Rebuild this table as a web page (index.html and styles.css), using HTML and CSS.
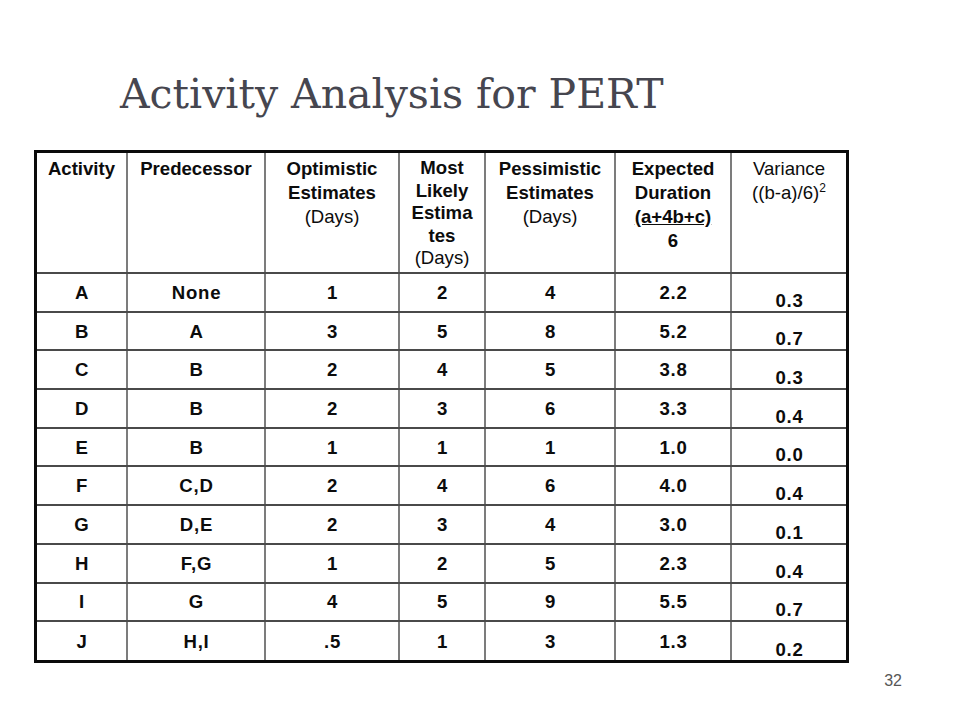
FILE: index.html
```html
<!DOCTYPE html>
<html lang="en">
<head>
<meta charset="utf-8">
<title>Activity Analysis for PERT</title>
<link rel="stylesheet" href="styles.css">
</head>
<body>
<div class="slide">
  <h1 class="title">Activity Analysis for PERT</h1>
  <div class="frame">
    <table class="pert">
      <colgroup>
        <col class="c-act">
        <col class="c-pred">
        <col class="c-opt">
        <col class="c-most">
        <col class="c-pess">
        <col class="c-exp">
        <col class="c-var">
      </colgroup>
      <thead>
        <tr class="head">
          <th>Activity</th>
          <th>Predecessor</th>
          <th>Optimistic<br>Estimates<br><span class="reg">(Days)</span></th>
          <th class="tight">Most<br>Likely<br>Estima<br>tes<br><span class="reg">(Days)</span></th>
          <th>Pessimistic<br>Estimates<br><span class="reg">(Days)</span></th>
          <th>Expected<br>Duration<br><span class="ul">(a+4b+c)</span><br>6</th>
          <th class="reg var-head">Variance<br>((b-a)/6)<sup>2</sup></th>
        </tr>
      </thead>
      <tbody>
        <tr><td>A</td><td>None</td><td>1</td><td>2</td><td>4</td><td>2.2</td><td class="var">0.3</td></tr>
        <tr><td>B</td><td>A</td><td>3</td><td>5</td><td>8</td><td>5.2</td><td class="var">0.7</td></tr>
        <tr><td>C</td><td>B</td><td>2</td><td>4</td><td>5</td><td>3.8</td><td class="var">0.3</td></tr>
        <tr><td>D</td><td>B</td><td>2</td><td>3</td><td>6</td><td>3.3</td><td class="var">0.4</td></tr>
        <tr><td>E</td><td>B</td><td>1</td><td>1</td><td>1</td><td>1.0</td><td class="var">0.0</td></tr>
        <tr><td>F</td><td>C,D</td><td>2</td><td>4</td><td>6</td><td>4.0</td><td class="var">0.4</td></tr>
        <tr><td>G</td><td>D,E</td><td>2</td><td>3</td><td>4</td><td>3.0</td><td class="var">0.1</td></tr>
        <tr><td>H</td><td>F,G</td><td>1</td><td>2</td><td>5</td><td>2.3</td><td class="var">0.4</td></tr>
        <tr><td>I</td><td>G</td><td>4</td><td>5</td><td>9</td><td>5.5</td><td class="var">0.7</td></tr>
        <tr><td>J</td><td>H,I</td><td>.5</td><td>1</td><td>3</td><td>1.3</td><td class="var">0.2</td></tr>
      </tbody>
    </table>
  </div>
  <div class="pageno">32</div>
</div>
</body>
</html>
```

FILE: styles.css
```css
html, body {
  margin: 0;
  padding: 0;
  background: #ffffff;
}

.slide {
  width: 960px;
  height: 720px;
  display: flex;
  flex-direction: column;
  align-items: flex-start;
}

.title {
  margin: 70px 0 0 120px;
  font-family: "DejaVu Serif", "Liberation Serif", serif;
  font-weight: normal;
  font-size: 41px;
  line-height: 48px;
  color: #46464f;
  white-space: nowrap;
}

.frame {
  margin: 32px 0 0 34px;
  border: 3px solid #0a0a0a;
}

.pert {
  border-collapse: collapse;
  table-layout: fixed;
  width: 809px;
  font-family: "Liberation Sans", Arial, sans-serif;
  font-size: 18.6px;
  font-weight: bold;
  color: #0c0c0c;
}

.c-act { width: 90px; }
.c-pred { width: 138px; }
.c-opt { width: 134px; }
.c-most { width: 86px; }
.c-pess { width: 130px; }
.c-exp { width: 116px; }
.c-var { width: 115px; }

.pert th,
.pert td {
  border-top: 2px solid #4a4a4a;
  border-bottom: 2px solid #4a4a4a;
  border-left: 2px solid #7c7c7c;
  border-right: 2px solid #7c7c7c;
  text-align: center;
  padding: 0 2px;
}

.pert tr > :first-child { border-left: none; }
.pert tr > :last-child { border-right: none; }
.pert thead th { border-top: none; }
.pert tbody tr:last-child td { border-bottom: none; }

.head { height: 120px; }

.pert th {
  vertical-align: top;
  padding-top: 4px;
  line-height: 24px;
  font-weight: bold;
}

.pert th.tight { line-height: 22.5px; }

.pert .reg { font-weight: normal; }

.var-head sup {
  font-size: 12px;
  line-height: 0;
  vertical-align: 7px;
}

.ul { text-decoration: underline; }

.pert tbody tr { height: 38.7px; }

.pert td {
  vertical-align: middle;
  line-height: 21px;
  letter-spacing: 0.8px;
  padding-left: 3px;
}

.pert td.var {
  vertical-align: bottom;
  padding-bottom: 0;
}

.pageno {
  align-self: flex-end;
  margin: 9px 58px 0 0;
  font-family: "Liberation Sans", Arial, sans-serif;
  font-size: 16px;
  line-height: 18px;
  color: #575757;
}
```
